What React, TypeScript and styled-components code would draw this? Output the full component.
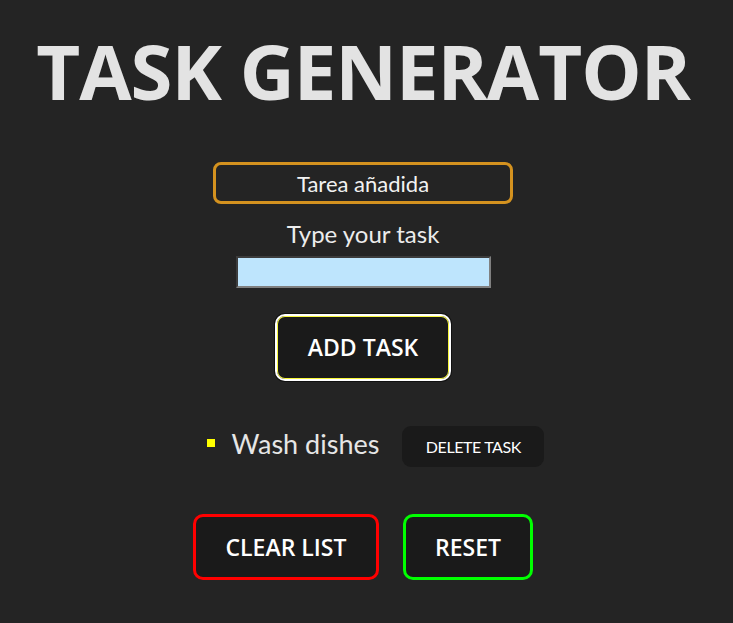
import React, { useState } from "react";
import styled, { createGlobalStyle } from "styled-components";

const GlobalStyle = createGlobalStyle`
  html, body {
    margin: 0;
    padding: 0;
    background-color: #242424;
  }
  * {
    box-sizing: border-box;
  }
`;

const App = (): JSX.Element => {
  const [task, setTask] = useState("");
  const [tasks, setTasks] = useState<string[]>(["Wash dishes"]);

  return (
    <>
      <GlobalStyle />
      <Page>
        <Title>TASK GENERATOR</Title>
        <Status>Tarea añadida</Status>
        <Label htmlFor="task">Type your task</Label>
        <TaskInput
          id="task"
          value={task}
          onChange={(e) => setTask(e.target.value)}
        />
        <AddButton
          onClick={() => {
            if (task.trim()) setTasks([...tasks, task.trim()]);
            setTask("");
          }}
        >
          ADD TASK
        </AddButton>
        <List>
          {tasks.map((t, index) => (
            <Item key={index}>
              <Bullet />
              <ItemText>{t}</ItemText>
              <DeleteButton
                onClick={() => setTasks(tasks.filter((_, i) => i !== index))}
              >
                DELETE TASK
              </DeleteButton>
            </Item>
          ))}
        </List>
        <Actions>
          <OutlineButton color="#ff0000" width={186} onClick={() => setTasks([])}>
            CLEAR LIST
          </OutlineButton>
          <OutlineButton
            color="#00ff00"
            width={130}
            onClick={() => setTasks(["Wash dishes"])}
          >
            RESET
          </OutlineButton>
        </Actions>
      </Page>
    </>
  );
};

const Page = styled.div`
  width: 726px;
  min-height: 623px;
  display: flex;
  flex-direction: column;
  align-items: center;
  padding-top: 33px;
  font-family: "Lato", "Noto Sans", sans-serif;
  color: #f2f2f2;
`;

const Title = styled.h1`
  margin: 0;
  font-family: "Open Sans", "Noto Sans", sans-serif;
  font-weight: 700;
  font-size: 76px;
  line-height: 76px;
  letter-spacing: -1px;
  color: #e3e3e3;
  white-space: nowrap;
`;

const Status = styled.div`
  margin-top: 53px;
  width: 300px;
  height: 42px;
  border: 3px solid #d4921f;
  border-radius: 8px;
  display: flex;
  align-items: center;
  justify-content: center;
  font-size: 22px;
  color: #f2f2f2;
`;

const Label = styled.label`
  margin-top: 16px;
  font-size: 24px;
  line-height: 27.6px;
  color: #ececec;
`;

const TaskInput = styled.input`
  margin-top: 8px;
  width: 255px;
  height: 32px;
  background-color: #bee5fd;
  border: 2px solid;
  border-color: #3c3c3c #808080 #808080 #3c3c3c;
  outline: none;
  font-size: 16px;
`;

const AddButton = styled.button`
  margin-top: 26px;
  width: 176px;
  height: 67px;
  background-color: #1a1a1a;
  border: 2px solid #ffffff;
  border-radius: 10px;
  box-shadow: inset 0 0 0 1px #f5f53a, 0 0 0 1px #111111;
  color: #ffffff;
  font-family: "Open Sans", "Noto Sans", sans-serif;
  font-weight: 600;
  font-size: 23px;
  cursor: pointer;
`;

const List = styled.ul`
  margin: 45px 0 0 0;
  padding: 0 0 0 25px;
  list-style: none;
  display: flex;
  flex-direction: column;
  gap: 12px;
`;

const Item = styled.li`
  display: flex;
  align-items: center;
  height: 41px;
`;

const Bullet = styled.span`
  width: 8px;
  height: 8px;
  background-color: #ffff00;
  margin-top: -6px;
`;

const ItemText = styled.span`
  margin-left: 17px;
  font-size: 27px;
  color: #e6e6e6;
  margin-top: -6px;
`;

const DeleteButton = styled.button`
  margin-left: 23px;
  width: 142px;
  height: 41px;
  background-color: #1a1a1a;
  border: none;
  border-radius: 9px;
  color: #ffffff;
  font-family: "Lato", "Noto Sans", sans-serif;
  font-size: 16px;
  letter-spacing: -0.4px;
  cursor: pointer;
`;

const Actions = styled.div`
  margin-top: 47px;
  display: flex;
  gap: 24px;
`;

const OutlineButton = styled.button<{ color: string; width: number }>`
  width: ${(props) => props.width}px;
  height: 66px;
  background-color: #1a1a1a;
  border: 3px solid ${(props) => props.color};
  border-radius: 10px;
  color: #ffffff;
  font-family: "Open Sans", "Noto Sans", sans-serif;
  font-weight: 600;
  font-size: 23px;
  cursor: pointer;
`;

export default App;
